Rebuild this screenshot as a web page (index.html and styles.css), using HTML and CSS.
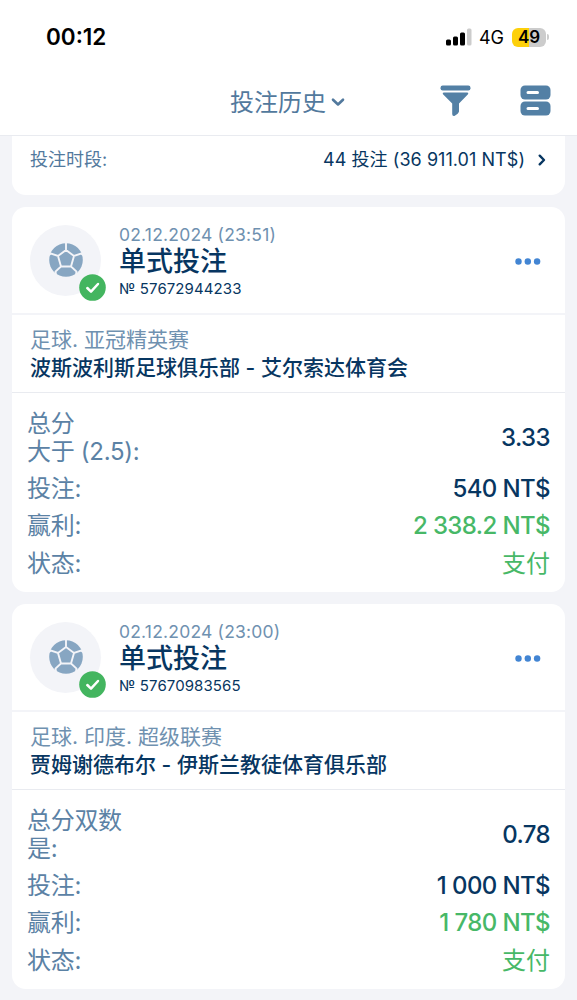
FILE: index.html
```html
<!DOCTYPE html>
<html lang="zh-CN">

<head>
    <meta charset="UTF-8">
    <meta name="viewport" content="width=device-width, initial-scale=1.0">
    <title>投注历史</title>
    <link rel="stylesheet" href="styles.css">
</head>

<body>
    <!-- Shared icons -->
    <svg class="sprite" xmlns="http://www.w3.org/2000/svg">
        <symbol id="ball" viewBox="0 0 34 34">
            <circle cx="17" cy="17" r="16.8" fill="#87a6c2" />
            <!-- seams -->
            <path d="M17 0V7L9 13L2 10.5L0 12M17 7L25 13L32 10.5L34 12M9 13L12 23.5L6.5 28.5L7 32M25 13L22 23.5L27.5 28.5L27 32M12 23.5H22" stroke="#f3f4f8" stroke-width="1.9" fill="none" />
        </symbol>
        <symbol id="check" viewBox="0 0 27 27">
            <circle cx="13.5" cy="13.5" r="13.3" fill="#43b55f" />
            <path d="M8.3 14L12 17.6L19 10" stroke="white" stroke-width="2.5" stroke-linecap="round" stroke-linejoin="round" fill="none" />
        </symbol>
        <symbol id="dots" viewBox="0 0 26 7">
            <circle cx="3.5" cy="3.5" r="3.2" />
            <circle cx="12.8" cy="3.5" r="3.2" />
            <circle cx="22.1" cy="3.5" r="3.2" />
        </symbol>
    </svg>

    <header class="header">
        <div class="status-bar">
            <span class="time">00:12</span>
            <div class="status-icons">
                <svg class="signal" width="26" height="18" viewBox="0 0 26 18">
                    <rect x="0" y="11.5" width="5" height="6" rx="1.5" />
                    <rect x="7" y="8.5" width="5" height="9" rx="1.5" />
                    <rect x="14" y="4.5" width="5" height="13" rx="1.5" />
                    <rect x="21" y="0.5" width="4.5" height="17" rx="1.5" fill="#cccccc" />
                </svg>
                <span class="network">4G</span>
                <span class="battery">49</span>
                <span class="battery-cap"></span>
            </div>
        </div>
        <nav class="navbar">
            <h1 class="page-title">投注历史
                <svg width="14" height="10" viewBox="0 0 14 10">
                    <path d="M2 2.7L7 7.5L12 2.7" stroke="#52799d" stroke-width="2.6" stroke-linecap="round" stroke-linejoin="round" fill="none" />
                </svg>
            </h1>
            <div class="nav-icons">
                <svg width="31" height="32" viewBox="0 0 31 32" fill="#5380a5">
                    <rect x="0.5" y="0.5" width="30" height="5" rx="2.2" />
                    <path d="M3.8 7.5H27.2Q29 7.8 28 9.3L19 18.5V26.5Q18.6 28.5 14.4 31Q12.2 31.5 12.2 29V18.5L3 9.3Q2 7.8 3.8 7.5Z" />
                </svg>
                <svg width="31" height="31" viewBox="0 0 31 31" fill="#5380a5">
                    <rect x="0.5" y="0.5" width="30" height="14" rx="4.5" />
                    <rect x="0.5" y="16.5" width="30" height="14" rx="4.5" />
                    <path d="M8 7.6H17.5M8 23.6H17.5" stroke="white" stroke-width="3" stroke-linecap="round" />
                </svg>
            </div>
        </nav>
    </header>

    <main>
        <section class="period">
            <span class="period-label">投注时段:</span>
            <span class="period-total">44 投注 (36 911.01 NT$)</span>
            <svg width="8" height="12" viewBox="0 0 8 12">
                <path d="M1.7 1.7L6 6L1.7 10.3" stroke="#073661" stroke-width="2.4" stroke-linecap="round" stroke-linejoin="round" fill="none" />
            </svg>
        </section>

        <article class="bet">
            <div class="bet-head">
                <div class="sport">
                    <svg class="ball"><use href="#ball" /></svg>
                    <svg class="check"><use href="#check" /></svg>
                </div>
                <div class="bet-info">
                    <p class="bet-date">02.12.2024 (23:51)</p>
                    <h2 class="bet-type">单式投注</h2>
                    <p class="bet-number">№ 57672944233</p>
                </div>
                <svg class="dots"><use href="#dots" /></svg>
            </div>
            <div class="event">
                <p class="league">足球. 亚冠精英赛</p>
                <p class="teams">波斯波利斯足球俱乐部 - 艾尔索达体育会</p>
            </div>
            <div class="details">
                <div class="row outcome">
                    <span class="label">总分<br>大于 (2.5):</span>
                    <span class="value">3.33</span>
                </div>
                <div class="row">
                    <span class="label">投注:</span>
                    <span class="value">540 NT$</span>
                </div>
                <div class="row">
                    <span class="label">赢利:</span>
                    <span class="value win">2 338.2 NT$</span>
                </div>
                <div class="row">
                    <span class="label">状态:</span>
                    <span class="value win paid">支付</span>
                </div>
            </div>
        </article>

        <article class="bet">
            <div class="bet-head">
                <div class="sport">
                    <svg class="ball"><use href="#ball" /></svg>
                    <svg class="check"><use href="#check" /></svg>
                </div>
                <div class="bet-info">
                    <p class="bet-date">02.12.2024 (23:00)</p>
                    <h2 class="bet-type">单式投注</h2>
                    <p class="bet-number">№ 57670983565</p>
                </div>
                <svg class="dots"><use href="#dots" /></svg>
            </div>
            <div class="event">
                <p class="league">足球. 印度. 超级联赛</p>
                <p class="teams">贾姆谢德布尔 - 伊斯兰教徒体育俱乐部</p>
            </div>
            <div class="details">
                <div class="row outcome">
                    <span class="label">总分双数<br>是:</span>
                    <span class="value">0.78</span>
                </div>
                <div class="row">
                    <span class="label">投注:</span>
                    <span class="value">1 000 NT$</span>
                </div>
                <div class="row">
                    <span class="label">赢利:</span>
                    <span class="value win">1 780 NT$</span>
                </div>
                <div class="row">
                    <span class="label">状态:</span>
                    <span class="value win paid">支付</span>
                </div>
            </div>
        </article>
    </main>
</body>

</html>
```
FILE: styles.css
```css
* {
    box-sizing: border-box;
    margin: 0;
    padding: 0;
}

body {
    background-color: #f3f4f8;
    font-family: Inter, "Noto Sans CJK SC", sans-serif;
    color: #073661;
    height: 1000px;
    overflow: hidden;
}

svg {
    display: block;
    flex-shrink: 0;
}

.sprite {
    width: 0;
    height: 0;
    position: absolute;
}

.header {
    height: 136px;
    background-color: white;
    border-bottom: 1px solid #e9ebf0;
}

.status-bar {
    display: flex;
    justify-content: space-between;
    align-items: center;
    height: 74px;
    padding: 0 28px 0 46px;
    color: black;
}

.time {
    font-size: 22.5px;
    font-weight: 600;
    line-height: 26px;
}

.status-icons {
    display: flex;
    align-items: center;
}

.network {
    font-size: 18px;
    margin-left: 7px;
}

.battery {
    width: 34px;
    height: 19px;
    margin-left: 8px;
    border-radius: 6px;
    background: linear-gradient(to right, #fdd00b 49%, #cccccc 49%);
    font-size: 17px;
    font-weight: 600;
    line-height: 18px;
    text-align: center;
}

.battery-cap {
    width: 2px;
    height: 6px;
    margin-left: 1px;
    border-radius: 0 2px 2px 0;
    background-color: #cccccc;
}

.navbar {
    display: grid;
    grid-template-columns: 1fr auto 1fr;
    align-items: center;
    height: 54px;
    padding: 0 26px 0 24px;
}

.page-title {
    grid-column: 2;
    display: flex;
    align-items: center;
    gap: 5px;
    padding-bottom: 1px;
    color: #52799d;
    font-size: 24px;
    font-weight: 400;
}

.page-title svg {
    margin-top: 3px;
}

.nav-icons {
    display: flex;
    justify-content: flex-end;
    gap: 49px;
}

main {
    padding: 0 12px;
}

.period {
    display: flex;
    align-items: center;
    height: 59px;
    padding: 0 19px 11px 18px;
    background-color: white;
    border-radius: 0 0 14px 14px;
    font-size: 18px;
    line-height: 24px;
}

.period-label {
    flex: 1;
    color: #52799d;
}

.period-total {
    margin-right: 13px;
    letter-spacing: 0.05px;
}

.bet {
    height: 385px;
    margin-top: 12px;
    background-color: white;
    border-radius: 14px;
}

.bet-head {
    display: flex;
    align-items: center;
    height: 108px;
    padding: 0 24px 0 18px;
    border-bottom: 2px solid #f3f4f8;
}

.sport {
    position: relative;
    display: flex;
    align-items: center;
    justify-content: center;
    width: 71px;
    height: 71px;
    border-radius: 50%;
    background-color: #f3f4f8;
}

.ball {
    width: 34px;
    height: 34px;
}

.check {
    position: absolute;
    right: -5px;
    bottom: -5px;
    width: 27px;
    height: 27px;
}

.bet-info {
    flex: 1;
    margin-left: 18px;
    padding-top: 3px;
}

.bet-date {
    color: #6f91b0;
    font-size: 17.5px;
    line-height: 21px;
    letter-spacing: 0.2px;
}

.bet-type {
    font-size: 27px;
    font-weight: 500;
    line-height: 33px;
}

.bet-number {
    font-size: 15px;
    line-height: 22px;
    letter-spacing: 0.1px;
}

.dots {
    width: 26px;
    height: 7px;
    margin-top: 2px;
    fill: #4285d3;
}

.event {
    height: 78px;
    padding: 11px 18px 0;
    border-bottom: 1px solid #e9ebf0;
    font-size: 21px;
    line-height: 28px;
    white-space: nowrap;
}

.league {
    color: #6f91b0;
}

.teams {
    font-weight: 500;
}

.details {
    padding: 15px 15px 0;
    font-size: 24px;
}

.row {
    display: flex;
    justify-content: space-between;
    align-items: center;
    height: 37.5px;
}

.row.outcome {
    height: 59px;
    margin-bottom: 3px;
}

.label {
    color: #5b82a5;
    line-height: 28px;
    letter-spacing: -0.3px;
}

.value {
    font-weight: 500;
    line-height: 28px;
    letter-spacing: -0.6px;
}

.win {
    color: #47b867;
}

.paid {
    font-weight: 400;
    letter-spacing: 0;
}
```
